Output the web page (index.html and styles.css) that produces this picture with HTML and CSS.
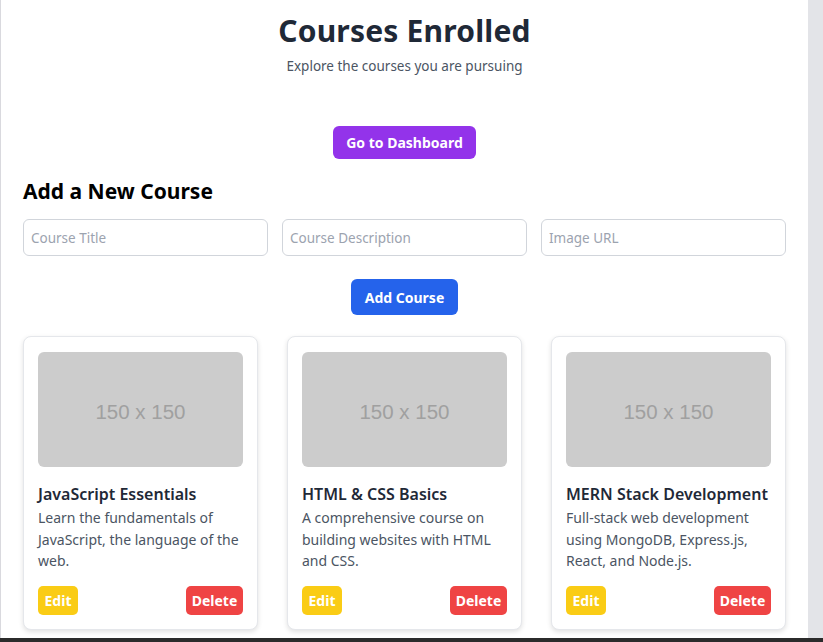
FILE: index.html
```html
<!DOCTYPE html>
<html lang="en">
<head>
<meta charset="utf-8">
<title>Courses Enrolled</title>
<link rel="stylesheet" href="styles.css">
</head>
<body>
<div class="screen">
  <div class="viewport">
    <main class="page">
      <header class="hero">
        <h1 class="hero-title">Courses Enrolled</h1>
        <p class="hero-sub">Explore the courses you are pursuing</p>
      </header>
      <div class="center-row dash-row">
        <button class="btn btn-purple">Go to Dashboard</button>
      </div>
      <h2 class="section-title">Add a New Course</h2>
      <div class="inputs">
        <input class="field" type="text" placeholder="Course Title">
        <input class="field" type="text" placeholder="Course Description">
        <input class="field" type="text" placeholder="Image URL">
      </div>
      <div class="center-row add-row">
        <button class="btn btn-blue">Add Course</button>
      </div>
      <section class="cards">
        <article class="card">
          <div class="thumb">150 x 150</div>
          <h3 class="card-title">JavaScript Essentials</h3>
          <p class="card-desc">Learn the fundamentals of JavaScript, the language of the web.</p>
          <div class="card-actions">
            <button class="btn-sm btn-yellow">Edit</button>
            <button class="btn-sm btn-red">Delete</button>
          </div>
        </article>
        <article class="card">
          <div class="thumb">150 x 150</div>
          <h3 class="card-title">HTML &amp; CSS Basics</h3>
          <p class="card-desc">A comprehensive course on building websites with HTML and CSS.</p>
          <div class="card-actions">
            <button class="btn-sm btn-yellow">Edit</button>
            <button class="btn-sm btn-red">Delete</button>
          </div>
        </article>
        <article class="card">
          <div class="thumb">150 x 150</div>
          <h3 class="card-title">MERN Stack Development</h3>
          <p class="card-desc">Full-stack web development using MongoDB, Express.js, React, and Node.js.</p>
          <div class="card-actions">
            <button class="btn-sm btn-yellow">Edit</button>
            <button class="btn-sm btn-red">Delete</button>
          </div>
        </article>
      </section>
    </main>
    <div class="gutter"></div>
  </div>
  <div class="taskbar"></div>
</div>
</body>
</html>
```

FILE: styles.css
```css
* { box-sizing: border-box; }
html, body { margin: 0; padding: 0; }
body {
  font-family: "Noto Sans", "Open Sans", sans-serif;
  background: #ffffff;
  width: 823px;
  height: 642px;
  overflow: hidden;
}
.screen {
  display: flex;
  flex-direction: column;
  height: 642px;
}
.viewport {
  display: flex;
  height: 638px;
  overflow: hidden;
}
.page {
  width: 808px;
  flex: none;
  background: #ffffff;
  border-left: 1px solid #d9d9de;
  padding: 0 22px 0 22px;
}
.gutter {
  flex: 1;
  background: #e3e4e8;
}
.taskbar {
  height: 4px;
  background: #2b2b2b;
}
.hero {
  text-align: center;
  padding-top: 13px;
}
.hero-title {
  margin: 0;
  font-size: 30px;
  line-height: 36px;
  font-weight: 700;
  color: #1f2937;
  letter-spacing: 0.2px;
}
.hero-sub {
  margin: 7px 0 0;
  font-size: 13.5px;
  line-height: 20px;
  color: #4b5563;
}
.center-row {
  display: flex;
  justify-content: center;
}
.dash-row { margin-top: 50px; }
.btn {
  border: none;
  color: #ffffff;
  font-family: inherit;
  font-weight: 700;
  font-size: 14px;
  border-radius: 6px;
  display: flex;
  align-items: center;
  justify-content: center;
}
.btn-purple {
  background: #9333ea;
  width: 143px;
  height: 33px;
}
.btn-blue {
  background: #2563eb;
  width: 107px;
  height: 36px;
}
.section-title {
  margin: 16px 0 0;
  font-size: 21px;
  line-height: 32px;
  font-weight: 700;
  color: #000000;
}
.inputs {
  display: grid;
  grid-template-columns: repeat(3, 1fr);
  gap: 14px;
  margin-top: 12px;
}
.field {
  height: 37px;
  border: 1px solid #d1d5db;
  border-radius: 6px;
  padding: 0 7px;
  font-family: inherit;
  font-size: 13.5px;
  color: #111827;
  outline: none;
}
.field::placeholder { color: #9ca3af; }
.add-row { margin-top: 23px; }
.cards {
  display: grid;
  grid-template-columns: repeat(3, 235px);
  column-gap: 29px;
  margin-top: 21px;
}
.card {
  border: 1px solid #e5e7eb;
  border-radius: 8px;
  padding: 15px 14px 14px;
  box-shadow: 0 2px 5px rgba(0, 0, 0, 0.12);
  background: #ffffff;
}
.thumb {
  height: 115px;
  background: #cccccc;
  border-radius: 6px;
  display: flex;
  align-items: center;
  justify-content: center;
  padding-top: 5px;
  font-family: "Liberation Sans", Arial, sans-serif;
  font-size: 20.5px;
  color: #a0a0a0;
}
.card-title {
  margin: 15px 0 0;
  font-size: 16px;
  line-height: 24px;
  font-weight: 600;
  color: #1f2937;
}
.card-desc {
  margin: 1px 0 0;
  font-size: 14px;
  line-height: 21.5px;
  color: #4b5563;
}
.card-actions {
  display: flex;
  justify-content: space-between;
  margin-top: 14px;
}
.btn-sm {
  border: none;
  border-radius: 5px;
  height: 29px;
  color: #ffffff;
  font-family: inherit;
  font-weight: 700;
  font-size: 14px;
  padding: 0;
}
.btn-yellow { background: #facc15; width: 40px; }
.btn-red { background: #ef4444; width: 57px; }
```
